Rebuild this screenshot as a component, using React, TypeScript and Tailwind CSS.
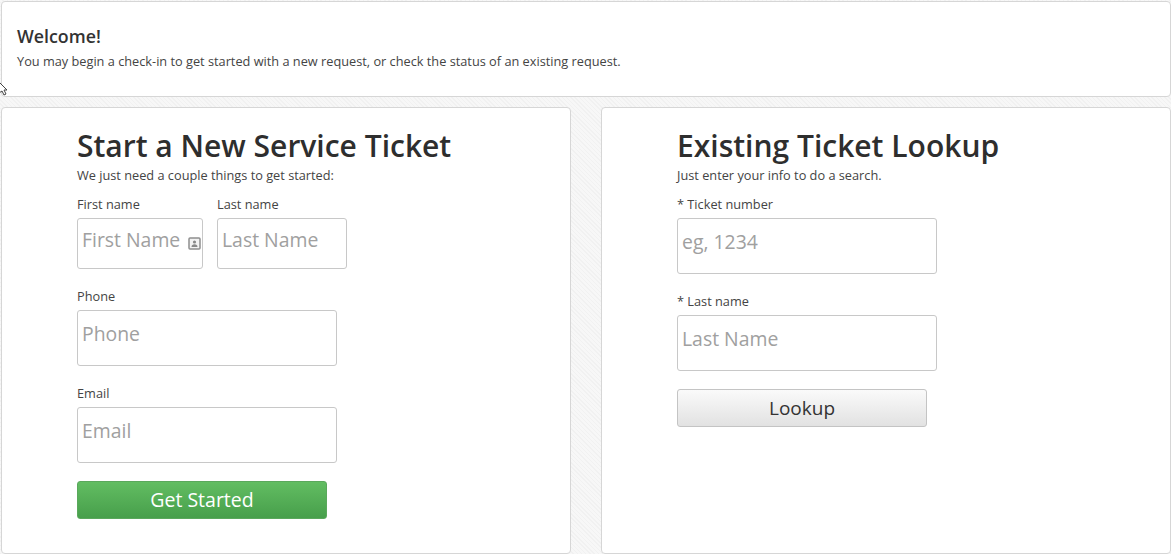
import type { ReactNode } from "react";

const font = { fontFamily: '"Open Sans", sans-serif' };

function Field({
  label,
  placeholder,
  width,
  height,
  children,
}: {
  label: string;
  placeholder: string;
  width: string;
  height: string;
  children?: ReactNode;
}) {
  return (
    <div className="flex flex-col">
      <label className="text-[12.75px] leading-[17px] text-[#444] mb-[5px]">{label}</label>
      <div className={`relative ${width} ${height}`}>
        <input
          placeholder={placeholder}
          className="w-full h-full border border-[#c8c8c8] rounded-[3px] bg-white pl-[4px] pb-[9px] text-[19.4px] text-[#333] placeholder:text-[#a0a0a0] outline-none"
        />
        {children}
      </div>
    </div>
  );
}

function ContactIcon() {
  return (
    <svg
      className="absolute right-[2px] top-[19px]"
      width="13"
      height="13"
      viewBox="0 0 13 13"
    >
      <rect x="1" y="1" width="11" height="11" rx="1" fill="#f2f2f2" stroke="#8f8f8f" strokeWidth="1.5" />
      <circle cx="6.5" cy="5" r="1.6" fill="#888" />
      <path d="M3.5 10c0-2 1.2-2.8 3-2.8s3 .8 3 2.8z" fill="#888" />
    </svg>
  );
}

export default function App() {
  return (
    <div
      style={font}
      className="w-[1171px] h-[554px] overflow-hidden relative bg-[repeating-linear-gradient(45deg,#f1f1f1_0,#f1f1f1_1px,#f7f7f7_1px,#f7f7f7_3px)] pt-[1px] pl-[1px]"
    >
      <div className="h-[96px] bg-white border border-[#d6d6d6] rounded-[4px] pl-[15px] pt-[22px]">
        <h1 className="text-[17.8px] leading-[25px] font-semibold text-[#333]">Welcome!</h1>
        <p className="text-[12.75px] leading-[18px] mt-[3px] text-[#444]">
          You may begin a check-in to get started with a new request, or check the status of an existing request.
        </p>
      </div>

      {/* mouse pointer caught in the capture */}
      <svg className="absolute left-0 top-[81px]" width="8" height="15" viewBox="0 0 8 15">
        <path d="M-1 1l8 8H4l2 4-2 1-2-4-3 2z" fill="#fff" stroke="#444" strokeWidth="1" />
      </svg>

      <div className="flex gap-[30px] mt-[10px]">
        <div className="w-[570px] h-[447px] shrink-0 bg-white border border-[#d6d6d6] rounded-[4px] pl-[75px] pt-[19px]">
          <h2 className="text-[30px] leading-[38px] font-semibold text-[#2e2e2e]">Start a New Service Ticket</h2>
          <p className="text-[12.75px] leading-[18px] text-[#444] mt-[1px]">We just need a couple things to get started:</p>
          <div className="flex gap-[14px] mt-[12px]">
            <Field label="First name" placeholder="First Name" width="w-[126px]" height="h-[51px]">
              <ContactIcon />
            </Field>
            <Field label="Last name" placeholder="Last Name" width="w-[130px]" height="h-[51px]" />
          </div>
          <div className="mt-[19px]">
            <Field label="Phone" placeholder="Phone" width="w-[260px]" height="h-[56px]" />
          </div>
          <div className="mt-[19px]">
            <Field label="Email" placeholder="Email" width="w-[260px]" height="h-[56px]" />
          </div>
          <button className="block mt-[18px] w-[250px] h-[38px] rounded-[3px] border border-[#5aa85c] bg-gradient-to-b from-[#62bd62] to-[#479f4b] text-white text-[19.5px] leading-none">
            Get Started
          </button>
        </div>

        <div className="flex-1 h-[447px] bg-white border border-[#d6d6d6] rounded-[4px] pl-[75px] pt-[19px]">
          <h2 className="text-[30px] leading-[38px] font-semibold text-[#2e2e2e]">Existing Ticket Lookup</h2>
          <p className="text-[12.75px] leading-[18px] text-[#444] mt-[1px]">Just enter your info to do a search.</p>
          <div className="mt-[12px]">
            <Field label="* Ticket number" placeholder="eg, 1234" width="w-[260px]" height="h-[56px]" />
          </div>
          <div className="mt-[19px]">
            <Field label="* Last name" placeholder="Last Name" width="w-[260px]" height="h-[56px]" />
          </div>
          <button className="block mt-[18px] w-[250px] h-[38px] rounded-[3px] border border-[#c4c4c4] bg-gradient-to-b from-[#fafafa] to-[#e2e2e2] text-[#333] text-[19px] leading-none">
            Lookup
          </button>
        </div>
      </div>
    </div>
  );
}
